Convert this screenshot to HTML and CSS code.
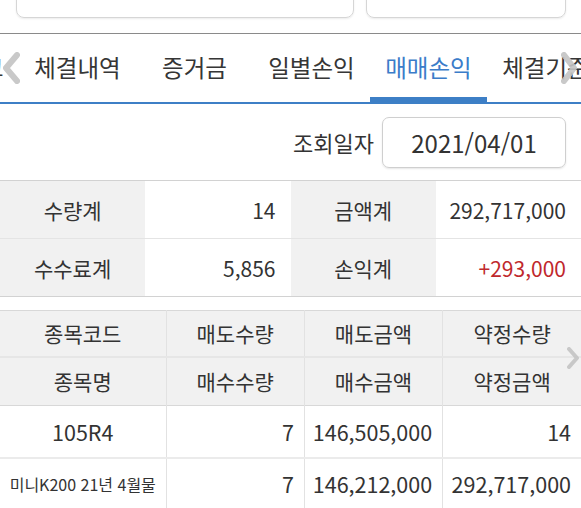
FILE: index.html
```html
<!DOCTYPE html>
<html lang="ko">
<head>
  <meta charset="UTF-8" />
  <meta name="viewport" content="width=device-width, initial-scale=1.0"/>
  <title>매매손익</title>
  <link rel="stylesheet" href="styles.css">
</head>
<body>

<div class="search">
  <div class="search-box wide"></div>
  <div class="search-box"></div>
</div>

<nav class="tabs">
  <div class="tab-track">
    <div class="tab">계좌잔고</div>
    <div class="tab">체결내역</div>
    <div class="tab">증거금</div>
    <div class="tab">일별손익</div>
    <div class="tab active">매매손익</div>
    <div class="tab">체결기준</div>
  </div>
  <svg class="arrow arrow-left" width="20" height="34" viewBox="0 0 20 34"><path d="M16 4 L5 17 L16 30" /></svg>
  <svg class="arrow arrow-right" width="20" height="34" viewBox="0 0 20 34"><path d="M4 4 L14 17 L4 30" /></svg>
</nav>

<div class="date-row">
  <span class="date-label">조회일자</span>
  <div class="date-box">2021/04/01</div>
</div>

<table class="summary">
  <tr>
    <th>수량계</th>
    <td>14</td>
    <th>금액계</th>
    <td>292,717,000</td>
  </tr>
  <tr>
    <th>수수료계</th>
    <td>5,856</td>
    <th>손익계</th>
    <td class="plus">+293,000</td>
  </tr>
</table>

<div class="detail-wrap">
  <table class="detail">
    <colgroup>
      <col class="col-name">
      <col><col><col>
    </colgroup>
    <thead>
      <tr class="head-top">
        <th>종목코드</th>
        <th>매도수량</th>
        <th>매도금액</th>
        <th>약정수량</th>
      </tr>
      <tr class="head-bottom">
        <th>종목명</th>
        <th>매수수량</th>
        <th>매수금액</th>
        <th>약정금액</th>
      </tr>
    </thead>
    <tbody>
      <tr class="row-top">
        <td class="name">105R4</td>
        <td>7</td>
        <td>146,505,000</td>
        <td>14</td>
      </tr>
      <tr class="row-bottom">
        <td class="name small">미니K200 21년 4월물</td>
        <td>7</td>
        <td>146,212,000</td>
        <td>292,717,000</td>
      </tr>
    </tbody>
  </table>
  <svg class="arrow table-arrow" width="14" height="24" viewBox="0 0 14 24"><path d="M3 3 L11 12 L3 21" /></svg>
</div>

</body>
</html>
```

FILE: styles.css
```css
* { margin: 0; padding: 0; box-sizing: border-box; }
body {
  font-family: "Noto Sans CJK KR", "Noto Sans", sans-serif;
  background: #fff;
  color: #333;
  width: 581px;
  overflow: hidden;
}

.search {
  height: 34px;
  padding: 0 15px 0 16px;
  display: flex;
  gap: 12px;
  border-bottom: 1px solid #8a8a8a;
  overflow: hidden;
}

.search-box {
  width: 200px;
  height: 30px;
  margin-top: -12px;
  border: 1px solid #d6d6d6;
  border-radius: 8px;
  box-shadow: 0 1px 2px rgba(0, 0, 0, 0.08);
}

.search-box.wide { width: 338px; }

.tabs {
  position: relative;
  height: 70px;
  border-bottom: 2px solid #3d7fc6;
  overflow: hidden;
}

.tab-track {
  display: flex;
  height: 100%;
  margin-left: -98px;
}

.tab {
  flex: 0 0 117px;
  position: relative;
  display: flex;
  align-items: center;
  justify-content: center;
  padding-bottom: 2px;
  font-size: 23.5px;
  color: #363636;
  white-space: nowrap;
}

.tab.active { color: #3b7cc9; }

.tab.active::after {
  content: "";
  position: absolute;
  left: 0;
  right: 0;
  bottom: 0;
  height: 5px;
  background: #3d7fc6;
}

.arrow {
  position: absolute;
  fill: none;
  stroke: #c4c4c4;
  stroke-width: 6;
  stroke-linecap: round;
  stroke-linejoin: round;
  opacity: 0.9;
}

.arrow-left { left: 1px; top: 17px; }
.arrow-right { left: 560px; top: 17px; }

.date-row {
  height: 76px;
  display: flex;
  align-items: center;
  justify-content: flex-end;
  gap: 8px;
  padding-right: 15px;
}

.date-label { font-size: 22px; }

.date-box {
  width: 184px;
  height: 51px;
  display: flex;
  align-items: center;
  justify-content: center;
  border: 1px solid #cfcfcf;
  border-radius: 7px;
  box-shadow: 0 1px 2px rgba(0, 0, 0, 0.1);
  font-size: 24px;
  color: #333;
}

table {
  width: 100%;
  border-collapse: collapse;
  table-layout: fixed;
}

.summary {
  border-top: 1px solid #d2d2d2;
  border-bottom: 1px solid #d2d2d2;
}

.summary tr { height: 58px; }
.summary tr + tr { border-top: 1px solid #e4e4e4; }

.summary th {
  background: #f1f1f1;
  font-weight: normal;
  font-size: 21px;
  text-align: center;
}

.summary td {
  font-size: 21px;
  text-align: right;
  padding-right: 15px;
}

.summary .plus { color: #c0282c; }

.detail-wrap {
  position: relative;
  margin-top: 13px;
}

.detail {
  border-top: 1px solid #d8d8d8;
}

.detail .col-name { width: 166px; }

.detail th,
.detail td {
  border-left: 1px solid #e2e2e2;
  font-weight: normal;
}

.detail th:first-child,
.detail td:first-child { border-left: none; }

.detail thead th {
  background: #f1f1f1;
  font-size: 21px;
  text-align: center;
}

.detail .head-top { height: 46px; }
.detail .head-bottom { height: 49px; border-top: 2px solid #e6e6e6; }
.detail .row-top { height: 52px; border-top: 1px solid #d8d8d8; }
.detail .row-bottom { height: 51px; border-top: 2px solid #ebebeb; }

.detail td {
  font-size: 21.5px;
  text-align: right;
  padding-right: 10px;
}

.detail td.name {
  text-align: center;
  padding-right: 0;
}

.detail td.small { font-size: 16px; }

.table-arrow {
  left: 566px;
  top: 36px;
  stroke-width: 4;
}
```
